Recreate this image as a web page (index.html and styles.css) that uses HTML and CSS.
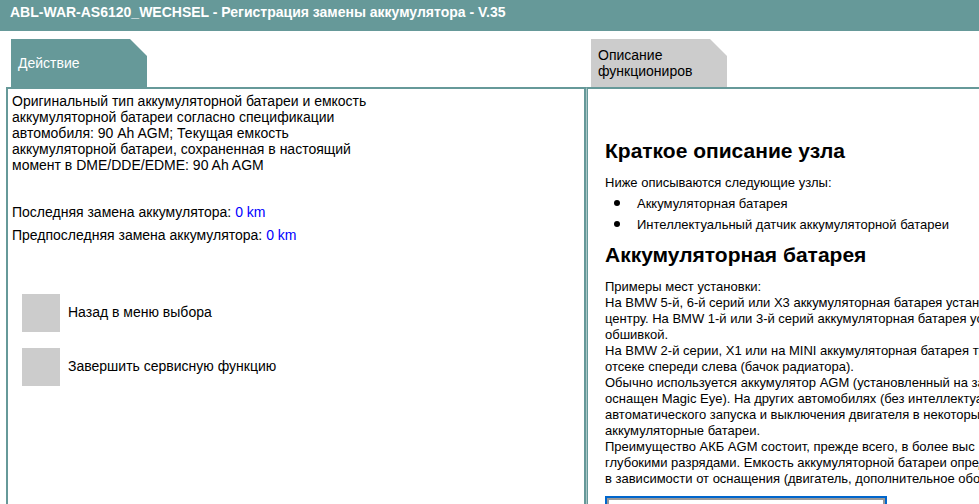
FILE: index.html
```html
<!DOCTYPE html>
<html lang="ru">
<head>
<meta charset="utf-8">
<title>ABL-WAR-AS6120_WECHSEL</title>
<link rel="stylesheet" href="styles.css">
</head>
<body>
<header class="title-bar"><h1 class="title">ABL-WAR-AS6120_WECHSEL - Регистрация замены аккумулятора - V.35</h1></header>
<main class="workspace">
  <section class="pane">
    <button type="button" class="tab tab-active">Действие</button>
    <div class="panel action">
      <p class="summary">Оригинальный тип аккумуляторной батареи и емкость аккумуляторной батареи согласно спецификации автомобиля: 90 Ah AGM; Текущая емкость аккумуляторной батареи, сохраненная в настоящий момент в DME/DDE/EDME: 90 Ah AGM</p>
      <div class="history">
        <p class="reading">Последняя замена аккумулятора: <span class="value">0 km</span></p>
        <p class="reading">Предпоследняя замена аккумулятора: <span class="value">0 km</span></p>
      </div>
      <div class="choices">
        <button type="button" class="choice"><span class="choice-box"></span>Назад в меню выбора</button>
        <button type="button" class="choice"><span class="choice-box"></span>Завершить сервисную функцию</button>
      </div>
    </div>
  </section>
  <section class="pane">
    <button type="button" class="tab">Описание функциониров</button>
    <div class="panel document">
      <h2 class="heading">Краткое описание узла</h2>
      <p class="text">Ниже описываются следующие узлы:</p>
      <ul class="list">
        <li class="item">Аккумуляторная батарея</li>
        <li class="item">Интеллектуальный датчик аккумуляторной батареи</li>
      </ul>
      <h2 class="heading">Аккумуляторная батарея</h2>
      <p class="text">Примеры мест установки:<br>
      На BMW 5-й, 6-й серий или X3 аккумуляторная батарея устано<br>
      центру. На BMW 1-й или 3-й серий аккумуляторная батарея ус<br>
      обшивкой.<br>
      На BMW 2-й серии, X1 или на MINI аккумуляторная батарея тр<br>
      отсеке спереди слева (бачок радиатора).<br>
      Обычно используется аккумулятор AGM (установленный на за<br>
      оснащен Magic Eye). На других автомобилях (без интеллектуа<br>
      автоматического запуска и выключения двигателя в некоторы<br>
      аккумуляторные батареи.<br>
      Преимущество АКБ AGM состоит, прежде всего, в более выс<br>
      глубокими разрядами. Емкость аккумуляторной батареи опред<br>
      в зависимости от оснащения (двигатель, дополнительное обо</p>
      <div class="figure"></div>
    </div>
  </section>
</main>
</body>
</html>
```

FILE: styles.css
```css
* {
  box-sizing: border-box;
}

body {
  margin: 0;
  height: 100vh;
  display: flex;
  flex-direction: column;
  overflow: hidden;
  background: #fff;
  color: #000;
  font: 14px/16px "Liberation Sans", Arial, sans-serif;
}

h1, h2, p, ul {
  margin: 0;
  padding: 0;
}

button {
  border: 0;
  background: none;
  color: inherit;
  font: inherit;
  text-align: left;
}

.title-bar {
  padding: 4px 10px 11px;
  background: #699;
  color: #fff;
}

.title {
  font-size: 14px;
  line-height: 16px;
  white-space: nowrap;
}

.workspace {
  flex: 1;
  min-height: 0;
  display: grid;
  grid-template-columns: 580fr 393fr;
  padding: 8px 0 0 6px;
}

.pane {
  display: flex;
  flex-direction: column;
  min-width: 0;
  min-height: 0;
}

.tab {
  flex: none;
  width: 136px;
  height: 48px;
  margin-left: 5px;
  padding: 0 24px 0 7px;
  background: #ccc;
  clip-path: polygon(0 0, calc(100% - 17px) 0, 100% 17px, 100% 100%, 0 100%);
}

.tab-active {
  background: #699;
  color: #fff;
}

.panel {
  flex: 1;
  min-height: 0;
  overflow: hidden;
  border: solid #699;
  border-width: 2px 2px 0;
}

.action {
  padding: 4px;
}

.summary {
  max-width: 370px;
}

.history {
  margin-top: 28px;
}

.reading {
  line-height: 23px;
}

.value {
  color: #00f;
}

.choices {
  display: flex;
  flex-direction: column;
  align-items: flex-start;
  gap: 16px;
  margin: 47px 0 0 10px;
}

.choice {
  display: flex;
  gap: 8px;
  padding: 0;
  line-height: 36px;
}

.choice-box {
  width: 38px;
  height: 38px;
  background: #ccc;
}

.document {
  padding: 48px 0 0 18px;
  border-right: 0;
  border-left: 1px solid #a9c6c6;
  box-shadow: inset 1px 0 #699;
  font-size: 13px;
  white-space: nowrap;
}

.heading {
  font-size: 21px;
  line-height: 28px;
}

.text {
  margin-top: 10px;
}

.list {
  margin: 2px 0 6px;
  padding-left: 32px;
  list-style: none;
}

.item {
  display: flex;
  align-items: center;
  line-height: 21px;
}

.item::before {
  content: "";
  width: 6px;
  height: 6px;
  margin: 0 17px 2px -23px;
  border-radius: 50%;
  background: #000;
}

.figure {
  width: 282px;
  height: 200px;
  margin-top: 9px;
  border: 2px solid #06c;
  outline: 2px solid #999;
  outline-offset: -4px;
}
```
